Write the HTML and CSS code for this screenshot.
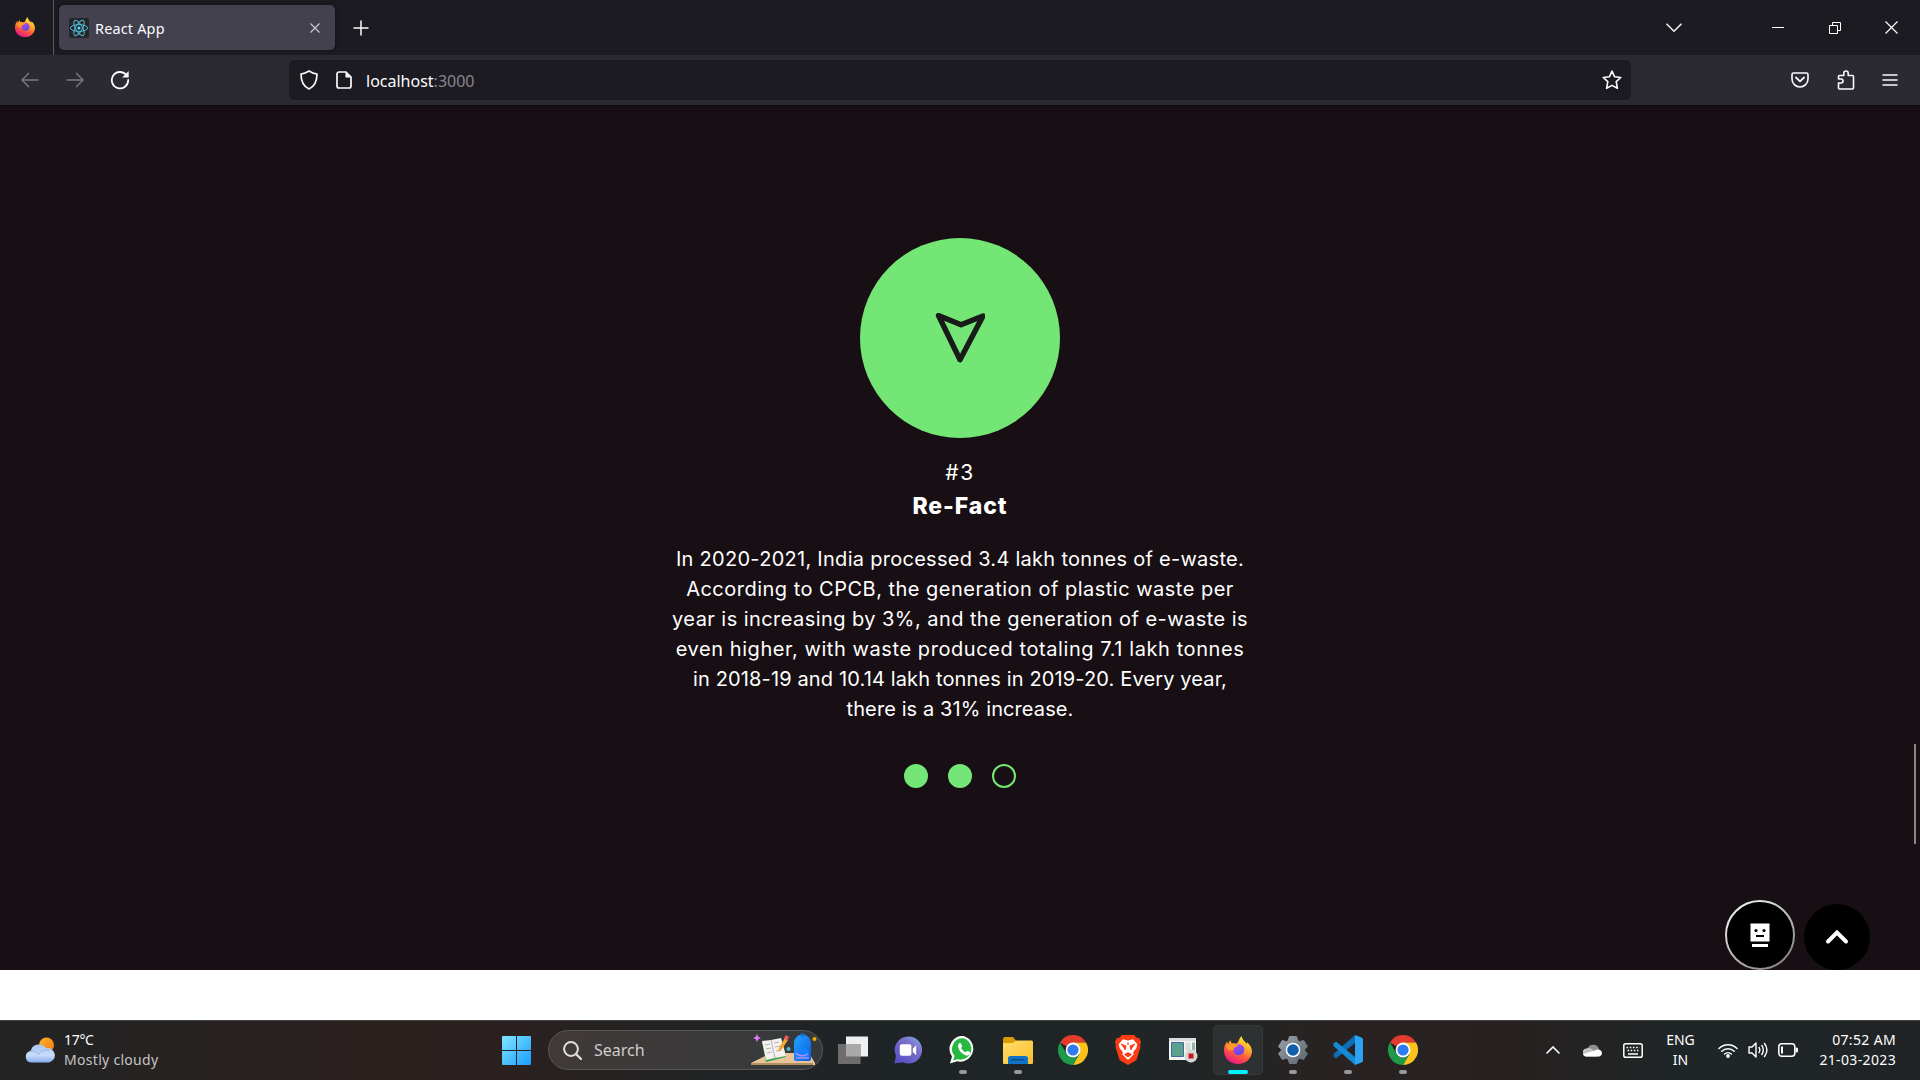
FILE: index.html
```html
<!DOCTYPE html>
<html lang="en">
<head>
<meta charset="utf-8">
<title>React App</title>
<link rel="stylesheet" href="styles.css">
</head>
<body>
<svg class="defs" width="0" height="0" aria-hidden="true">
  <defs>
    <linearGradient id="ffBody" x1="0.8" y1="0" x2="0.3" y2="1"><stop offset="0" stop-color="#fff14a"/><stop offset=".35" stop-color="#ffb02a"/><stop offset=".65" stop-color="#ff5a3c"/><stop offset="1" stop-color="#e5128c"/></linearGradient>
    <linearGradient id="ffCore" x1="0.2" y1="0" x2="0.6" y2="1"><stop offset="0" stop-color="#b44af0"/><stop offset="1" stop-color="#5a4be0"/></linearGradient>
    <linearGradient id="winTile" x1="0" y1="0" x2="1" y2="1"><stop offset="0" stop-color="#7fe7ff"/><stop offset="1" stop-color="#1a9cff"/></linearGradient>
    <linearGradient id="sun" x1="0" y1="0" x2="1" y2="1"><stop offset="0" stop-color="#fbb626"/><stop offset="1" stop-color="#f5760f"/></linearGradient>
    <linearGradient id="cloud" x1="0" y1="0" x2="0" y2="1"><stop offset="0" stop-color="#a9c6f5"/><stop offset=".6" stop-color="#c9dbf8"/><stop offset="1" stop-color="#86aef0"/></linearGradient>
    <linearGradient id="chat" x1="1" y1="0" x2="0.2" y2="1"><stop offset="0" stop-color="#7fb2ea"/><stop offset=".4" stop-color="#7c6fc8"/><stop offset="1" stop-color="#5650c4"/></linearGradient>
    <linearGradient id="folder" x1="0" y1="0" x2="1" y2="1"><stop offset="0" stop-color="#ffdc6a"/><stop offset="1" stop-color="#fbc02c"/></linearGradient>
    <linearGradient id="gear" x1="0" y1="0" x2="1" y2="1"><stop offset="0" stop-color="#98a2ab"/><stop offset="1" stop-color="#5d656d"/></linearGradient>
    <linearGradient id="ring" x1="0" y1="0" x2="0.7" y2="1"><stop offset="0" stop-color="#fff"/><stop offset="1" stop-color="#8a8588"/></linearGradient>
    <linearGradient id="bag" x1="0" y1="0" x2="1" y2="1"><stop offset="0" stop-color="#22a5ff"/><stop offset="1" stop-color="#0a5be0"/></linearGradient>
    <symbol id="firefox" viewBox="0 0 28 28">
      <path fill="url(#ffBody)" d="M14 28C6 28 0 22.400 0 14.600 0 11 1.200 7.500 3.200 5.600c.1 1.100.3 1.900.9 2.600C4.500 6.600 5.300 5.300 6.600 4.300c0 1.300.4 2.300 1.300 3 1.300-.3 3-.2 4.300.5 1-.4 1.600-1.200 2.200-2.200C15 3.600 16 1.500 17.600 0c.5 2.600 1.600 4.300 3.300 5.800.8.700 1.400 1.300 1.900 2.200.2-.7.2-1.300.1-2C26.200 8.800 28 12 28 15.600 27.600 22.800 21.700 28 14 28z"/>
      <path fill="url(#ffCore)" d="M9 13.200c.6-3.500 4-5.700 7.400-4.700 3 .9 4.500 3.700 3.600 6.800-.8 3-4 4.700-7 3.700-2.600-.9-4-3.100-4-5.800z"/>
      <path fill="#ff9a2a" d="M2 11c2.300-2.500 6.500-4 10-3l2 1.200c-1.200 1.700-2.700 2.200-4.500 2.400 0 1 .2 1.800.7 2.500-1.500-.5-3.200-.4-4.700 1C4 13.500 3 12 2 11z"/>
    </symbol>
    <symbol id="chrome" viewBox="0 0 30 30">
      <path fill="#e33b2e" d="M15 15 2 7.500A15 15 0 0 1 28 7.500H15z"/>
      <path fill="#fcc31e" d="M15 15V7.500h13A15 15 0 0 1 15 30l6.500-11.200z"/>
      <path fill="#1f9a4b" d="M2 7.500 8.500 18.800A7.500 7.500 0 0 0 21.500 18.800L15 30A15 15 0 0 1 2 7.500z"/>
      <circle cx="15" cy="15" r="7.400" fill="#fff"/><circle cx="15" cy="15" r="5.600" fill="#2f7bef"/>
    </symbol>
  </defs>
</svg>

<header class="tabs">
  <div class="pinned"><svg width="20" height="20"><use href="#firefox"/></svg></div>
  <div class="tab">
    <svg class="favicon" width="20" height="20" viewBox="0 0 20 20"><rect width="20" height="20" rx="2" fill="#22272a"/><g fill="none" stroke="#53b9d6" stroke-width="1"><ellipse cx="10" cy="10" rx="8.600" ry="3.400"/><ellipse cx="10" cy="10" rx="8.600" ry="3.400" transform="rotate(60 10 10)"/><ellipse cx="10" cy="10" rx="8.600" ry="3.400" transform="rotate(120 10 10)"/></g><circle cx="10" cy="10" r="1.600" fill="#61dafb"/></svg>
    <span class="tab-title">React App</span>
    <svg width="10" height="10" viewBox="0 0 10 10"><path d="M.5.5l9 9M9.500.5l-9 9" stroke="#c9c8ce" stroke-width="1.200"/></svg>
  </div>
  <svg class="new-tab" width="16" height="16" viewBox="0 0 16 16"><path d="M8 .5v15M.5 8h15" stroke="#fbfbfe" stroke-width="1.500"/></svg>
  <div class="window-controls">
    <svg width="16" height="10" viewBox="0 0 16 10"><path d="M1 1.200l7 7 7-7" fill="none" stroke="#f0f0f4" stroke-width="1.600" stroke-linecap="round"/></svg>
    <svg class="minimize" width="12" height="12" viewBox="0 0 12 12"><path d="M0 5.500h12" stroke="#fff"/></svg>
    <svg class="restore" width="12" height="12" viewBox="0 0 12 12"><path d="M.5 3.500h8v8h-8zM3.500 3.500v-3h8v8h-3" fill="none" stroke="#fff"/></svg>
    <svg class="close" width="13" height="13" viewBox="0 0 13 13"><path d="M.5.5l12 12M12.500.5l-12 12" stroke="#fff" stroke-width="1.200"/></svg>
  </div>
</header>

<nav class="toolbar">
  <svg class="nav-icon" width="18" height="16" viewBox="0 0 18 16"><path d="M17.500 8H1M8 1L1 8l7 7" fill="none" stroke="#7b7a81" stroke-width="1.400"/></svg>
  <svg class="nav-icon" width="18" height="16" viewBox="0 0 18 16"><path d="M.5 8H17M10 1l7 7-7 7" fill="none" stroke="#7b7a81" stroke-width="1.400"/></svg>
  <svg class="nav-icon reload" width="20" height="20" viewBox="0 0 20 20"><path d="M16.500 5.200A8.200 8.200 0 1 0 18.200 10" fill="none" stroke="#fbfbfe" stroke-width="1.800" stroke-linecap="round"/><path d="M18.700 1v6.600h-6.600z" fill="#fbfbfe"/></svg>
  <div class="urlbar">
    <svg width="18" height="20" viewBox="0 0 18 20"><path d="M9 1c2.500 1.600 5 2.600 8 3 0 6.500-1.500 12-8 15-6.500-3-8-8.500-8-15 3-.4 5.500-1.400 8-3z" fill="none" stroke="#fbfbfe" stroke-width="1.700" stroke-linejoin="round"/></svg>
    <svg class="page-icon" width="16" height="18" viewBox="0 0 16 18"><path d="M3 1h7l5 5v9a2 2 0 0 1-2 2H3a2 2 0 0 1-2-2V3a2 2 0 0 1 2-2z" fill="none" stroke="#fbfbfe" stroke-width="1.700"/><path d="M9.500 1v5.500H15z" fill="#fbfbfe"/></svg>
    <span class="url">localhost<span class="port">:3000</span></span>
    <svg width="20" height="20" viewBox="0 0 20 20"><path d="M10 1.200l2.500 5.500 6.300.8-4.600 4.200 1.200 6.600L10 15.400l-5.400 2.900 1.200-6.600L1.200 7.500l6.300-.8z" fill="none" stroke="#fbfbfe" stroke-width="1.600" stroke-linejoin="round"/></svg>
  </div>
  <div class="actions">
    <svg width="18" height="16" viewBox="0 0 18 16"><path d="M2.500 1h13A1.500 1.500 0 0 1 17 2.500V7a8 8 0 0 1-16 0V2.500A1.500 1.500 0 0 1 2.500 1z" fill="none" stroke="#fbfbfe" stroke-width="1.600"/><path d="M5 5.500l4 3.800 4-3.800" fill="none" stroke="#fbfbfe" stroke-width="1.800" stroke-linecap="round"/></svg>
    <svg width="18" height="20" viewBox="0 0 18 20"><path d="M1.500 13V18a1 1 0 0 0 1 1H15.500a1 1 0 0 0 1-1V6.500a1 1 0 0 0-1-1H11.200V3.200a2.200 2.200 0 0 0-4.400 0V5.500H2.500a1 1 0 0 0-1 1V9H4a2 2 0 0 1 0 4z" fill="none" stroke="#fbfbfe" stroke-width="1.600" stroke-linejoin="round"/></svg>
    <svg width="16" height="14" viewBox="0 0 16 14"><path d="M.5 2h15M.5 7h15M.5 12h15" stroke="#fbfbfe" stroke-width="1.400"/></svg>
  </div>
</nav>

<main class="page">
  <section class="fact">
    <div class="badge"><svg width="50" height="50" viewBox="0 0 50 50"><path d="M3.500 2.500L26 11.700 48 3 25 46.700z" fill="none" stroke="#181b18" stroke-width="5.400" stroke-linejoin="round"/></svg></div>
    <p class="number">#3</p>
    <h2 class="title">Re-Fact</h2>
    <p class="copy">
      <span class="l1">In 2020-2021, India processed 3.4 lakh tonnes of e-waste.</span><br>
      <span class="l2">According to CPCB, the generation of plastic waste per</span><br>
      <span class="l3">year is increasing by 3%, and the generation of e-waste is</span><br>
      <span class="l4">even higher, with waste produced totaling 7.1 lakh tonnes</span><br>
      <span class="l5">in 2018-19 and 10.14 lakh tonnes in 2019-20. Every year,</span><br>
      <span class="l6">there is a 31% increase.</span>
    </p>
    <div class="dots"><i class="dot"></i><i class="dot"></i><i class="dot open"></i></div>
  </section>
  <div class="floating">
    <svg width="70" height="70" viewBox="0 0 70 70"><circle cx="35" cy="35" r="34" fill="#000" stroke="url(#ring)" stroke-width="2"/><path fill="#fff" d="M25.500 23.500h19v18h-19zM27 44h16v3H27z"/><g fill="#000"><circle cx="31" cy="30.500" r="1.600"/><circle cx="39" cy="30.500" r="1.600"/><path d="M31 35h8v2h-8z"/></g></svg>
    <svg width="66" height="66" viewBox="0 0 66 66"><circle cx="33" cy="33" r="33" fill="#000"/><path d="M24 37.500l9-9 9 9" fill="none" stroke="#fff" stroke-width="4" stroke-linecap="round"/></svg>
  </div>
  <div class="scroll-thumb"></div>
</main>
<div class="below"></div>

<footer class="taskbar">
  <div class="weather">
    <svg width="30" height="26" viewBox="0 0 30 26"><circle cx="21.500" cy="8" r="7.500" fill="url(#sun)"/><path d="M6 25.500a5.800 5.800 0 0 1-.3-11.500A8.500 8.500 0 0 1 21 11.200 7.300 7.300 0 0 1 24 25.500z" fill="url(#cloud)"/><path d="M4 14.500c4-1.500 8 0 9.500 3 2-4 7-6 11-4" fill="none" stroke="#8fb1ec" stroke-width="1"/></svg>
    <div class="weather-text"><span class="temp">17°C</span><span class="sky">Mostly cloudy</span></div>
  </div>
  <svg class="start" width="29" height="29" viewBox="0 0 29 29"><path fill="url(#winTile)" d="M0 1a1 1 0 0 1 1-1h13v14H0zM15 0h13a1 1 0 0 1 1 1v13H15zM0 15h14v14H1a1 1 0 0 1-1-1zM15 15h14v13a1 1 0 0 1-1 1H15z"/></svg>
  <div class="search">
    <svg width="19" height="19" viewBox="0 0 19 19"><circle cx="8" cy="8" r="6.900" fill="none" stroke="#e0e0e0" stroke-width="2"/><path d="M13 13l5 5" stroke="#e0e0e0" stroke-width="2.400" stroke-linecap="round"/></svg>
    <span class="search-label">Search</span>
    <svg class="search-art" width="70" height="34" viewBox="0 0 70 34">
      <path d="M0 30L20 20h38l6 10v2H0z" fill="#e8c49b"/><path d="M0 30h62v2H0z" fill="#b98e62"/>
      <path d="M11 9l20-3 4 18-20 5z" fill="#3aa24c"/><path d="M11 8l9-1 4 18-9 2zM20 7l10-2 5 18-11 2z" fill="#f4f1ee"/><path d="M20 7l4 18M14 12l5-1M15 16l5-1M16 20l5-1M23 10l5-1M24 14l6-1M25 18l6-1" stroke="#a8a3a6" stroke-width=".8"/>
      <path d="M27 19l1-4 6-10 3 2-6 9z" fill="#f7a52c"/><path d="M33 5l2-3 3 2-2 4z" fill="#ee5b5b"/>
      <path d="M6 1l1.300 2.700L10 5 7.300 6.300 6 9 4.700 6.300 2 5l2.700-1.300z" fill="#dc7cf2"/>
      <circle cx="37.500" cy="16" r="2" fill="#45bdd8"/><circle cx="63.500" cy="6" r="2" fill="#f2a900"/>
      <path d="M43 26V10a8.500 8.500 0 0 1 17 0v16a2 2 0 0 1-2 2H45a2 2 0 0 1-2-2z" fill="url(#bag)"/><circle cx="51.500" cy="1.800" r="1.800" fill="none" stroke="#1569d8"/><path d="M45 25v-4a6.500 6 0 0 1 13 0v4z" fill="#1482ff"/><path d="M45 20c3 4 9 3 12 1M45 25h13" stroke="#b48cff" stroke-width="1.300" fill="none"/>
    </svg>
  </div>
  <div class="apps">
    <div class="app"><svg width="30" height="28" viewBox="0 0 30 28"><path d="M8 .5h22v20H8z" fill="#eeefef"/><path d="M0 8h22.500v20H0z" fill="#6d6d6d"/><path d="M8 8h14.500v12.500H8z" fill="#a9a9a9"/></svg></div>
    <div class="app"><svg width="28" height="28" viewBox="0 0 29 28"><path d="M15 0a14 14 0 1 1-6 26.600L.5 28l1.500-8A14 14 0 0 1 15 0z" fill="url(#chat)"/><rect x="6" y="8" width="12" height="12" rx="2" fill="#fff"/><path d="M19.500 12.500l3.500-3.500v10.500l-3.500-3.500z" fill="#fff"/></svg></div>
    <div class="app running"><svg width="28" height="28" viewBox="0 0 28 28"><path d="M14.500 0A13 13 0 1 1 8 25.200L1 27.500l2-7A13 13 0 0 1 14.500 0z" fill="#fff"/><path d="M14.500 2.300A10.800 10.800 0 1 1 8.500 23.200l-4.300 1.200L5.500 20A10.800 10.800 0 0 1 14.500 2.300z" fill="#29b842"/><path d="M10 7.300c.7-.6 1.700-.5 2 .2l1.100 2.400c.2.800-1.200 1.500-1 2.100.9 1.900 2.400 3.400 4.400 4.100.8.200 1.300-1.400 2.100-1.200l2.300 1.200c.9.500-.1 3-1.700 3.400C15 20.500 6.500 13 10 7.300z" fill="#fff"/></svg></div>
    <div class="app running"><svg width="30" height="27" viewBox="0 0 30 27"><path d="M0 2a2 2 0 0 1 2-2h8l3 3.500V9H0z" fill="#dc9a07"/><path d="M0 6h10l3-2.500h15.500A1.500 1.500 0 0 1 30 5v21a1 1 0 0 1-1 1H1a1 1 0 0 1-1-1z" fill="url(#folder)"/><path d="M5 27v-5.500A2.500 2.500 0 0 1 7.500 19h15a2.500 2.500 0 0 1 2.500 2.500V27z" fill="#0f74c7"/><path d="M8.500 22.700h13" stroke="#09457e" stroke-width="1.300"/></svg></div>
    <div class="app"><svg width="30" height="30"><use href="#chrome"/></svg></div>
    <div class="app"><svg width="26" height="30" viewBox="0 0 26 30"><path d="M7 0h12l3 3 2-.3L26 7l-1 3 .5 2-4 13L13 30l-8.500-5-4-13L1 10 0 7l2-4.300L4 3z" fill="#fa3c14"/><path d="M13 5.500l5-1.200 4.300 5-1 4-3.300 4 .8 2L13 25l-5.800-5.700.8-2-3.300-4-1-4 4.300-5z" fill="#fff"/><path d="M6 9l5 2-1 4M20 9l-5 2 1 4M13 7v3M9.500 19.500l3.500-1.800 3.500 1.800-3.500 2.300z" fill="#fa3c14" stroke="#fa3c14" stroke-width="1"/></svg></div>
    <div class="app"><svg width="30" height="26" viewBox="0 0 30 26"><path d="M1 1h27v22H1z" fill="#f4f4f4"/><path d="M1 1h27v3H1z" fill="#d9dde2"/><path d="M3.500 5.500h12v14h-12z" fill="#5aa08c" stroke="#3f6c9b"/><path d="M17.500 5.500h5v8h-5z" fill="#dcdcdc"/><path d="M24 5.500h3v8h-3z" fill="#8fb9a6"/><circle cx="23" cy="19" r="6.500" fill="#d6d6d6"/><rect x="20.500" y="16.500" width="5" height="5" fill="#cc1414"/></svg></div>
    <div class="app running active"><svg width="28" height="28"><use href="#firefox"/></svg></div>
    <div class="app running"><svg width="30" height="30" viewBox="0 0 30 30"><path d="M11.500 1.500h7l1.200 4 2 1.200 4-1.200 3.800 6-2.800 2.700v1.600l2.800 2.700-3.800 6-4-1.200-2 1.200-1.200 4h-7l-1.200-4-2-1.200-4 1.200-3.800-6 2.800-2.700v-1.600L.5 11.500l3.800-6 4 1.200 2-1.200z" fill="url(#gear)" stroke="url(#gear)" stroke-linejoin="round"/><circle cx="15" cy="15" r="7.300" fill="#fff"/><circle cx="15" cy="15" r="5.800" fill="#1160ad"/></svg></div>
    <div class="app running"><svg width="30" height="30" viewBox="0 0 30 30"><path d="M22 8L3 23.500.5 21.500V19L22 0z" fill="#0d6db5"/><path d="M22 22L3 6.500.5 8.500V11L22 30z" fill="#1489d4"/><path d="M22 0l6.500 2.500A2.500 2.500 0 0 1 30 4.800v20.400a2.500 2.500 0 0 1-1.500 2.300L22 30z" fill="#2ba3f2"/></svg></div>
    <div class="app running"><svg width="30" height="30"><use href="#chrome"/></svg></div>
  </div>
  <div class="tray">
    <svg class="up" width="14" height="8" viewBox="0 0 14 8"><path d="M1 7l6-6 6 6" fill="none" stroke="#fff" stroke-width="1.600" stroke-linecap="round"/></svg>
    <svg class="drive" width="20" height="13" viewBox="0 0 20 13"><path d="M4.500 5a6 6 0 0 1 11.500 0v4H4z" fill="#8f8f8f"/><path d="M4 12.500a4 4 0 0 1-.5-8c3-1 5 0 7 2l4 6z" fill="#c4c4c4"/><path d="M3 12.500c-1.500 0-2.500-1-3-2.500L12 6.500a5 5 0 0 1 4.500-.7A3.500 3.500 0 0 1 16.500 12.500z" fill="#fff"/></svg>
    <svg class="kbd" width="20" height="15" viewBox="0 0 20 15"><rect x=".8" y=".8" width="18.400" height="13.400" rx="1.800" fill="none" stroke="#fff" stroke-width="1.500"/><path d="M3.500 4.500h13M4.500 7.500h11" stroke="#fff" stroke-width="1.600" stroke-dasharray="1.600 1.600"/><path d="M5 11h10" stroke="#fff" stroke-width="1.500"/></svg>
    <div class="lang"><span>ENG</span><span>IN</span></div>
    <svg class="wifi" width="20" height="15" viewBox="0 0 20 15"><g fill="none" stroke="#fff" stroke-width="1.500" stroke-linecap="round"><path d="M1 5.500a12.500 12.500 0 0 1 18 0M3.800 8.300a8.600 8.600 0 0 1 12.400 0M6.600 11a4.900 4.900 0 0 1 6.800 0"/></g><circle cx="10" cy="13" r="1.900" fill="#fff"/></svg>
    <svg class="volume" width="20" height="18" viewBox="0 0 20 18"><g fill="none" stroke="#fff" stroke-width="1.400" stroke-linecap="round" stroke-linejoin="round"><path d="M1 6h3l4-4v14l-4-4H1zM11 6.500c1 1.500 1 3.500 0 5M13.800 4.500c2 2.500 2 6.500 0 9M16.500 2.500c3 4 3 9 0 13"/></g></svg>
    <svg class="battery" width="20" height="14" viewBox="0 0 20 14"><rect x=".8" y=".8" width="16" height="12.400" rx="3" fill="none" stroke="#fff" stroke-width="1.500"/><path d="M3 3.500h2v7H3zM17.500 4.500h1a1.500 1.500 0 0 1 1.500 1.500v2a1.500 1.500 0 0 1-1.500 1.500h-1z" fill="#fff"/></svg>
    <div class="clock"><span>07:52 AM</span><span>21-03-2023</span></div>
  </div>
</footer>
</body>
</html>
```
FILE: styles.css
```css
* { box-sizing: border-box; }
body {
  margin: 0;
  width: 1920px;
  height: 1080px;
  overflow: hidden;
  display: flex;
  flex-direction: column;
  background: #fff;
  color: #fff;
  font-family: "Noto Sans", "Open Sans", sans-serif;
}
svg { display: block; flex: none; }
p, h2 { margin: 0; }
.defs { position: absolute; }

/* Tab strip */
.tabs { height: 55px; background: #1c1b22; display: flex; align-items: center; }
.pinned { width: 54px; height: 55px; padding: 17px 0 0 15px; border-right: 1px solid #5b5a62; }
.tab { width: 276px; height: 45px; margin-left: 5px; padding: 0 15px 0 10px; display: flex; align-items: center; background: #42414d; border-radius: 5px; box-shadow: 0 0 4px rgba(0, 0, 0, .4); }
.tab-title { flex: 1; margin-left: 6px; padding-top: 2px; font-size: 14.4px; letter-spacing: .2px; color: #fbfbfe; }
.new-tab { margin-left: 18px; }
.window-controls { flex: 1; display: flex; align-items: center; justify-content: flex-end; padding-right: 22px; }
.minimize { margin-left: 90px; }
.restore { margin-left: 45px; }
.close { margin-left: 44px; }

/* Navigation bar */
.toolbar { height: 51px; padding: 0 22px 1px 21px; background: #2b2a33; border-bottom: 1px solid #0c0c0d; display: flex; align-items: center; }
.nav-icon { margin-right: 27px; }
.reload { margin-left: -1px; }
.urlbar { width: 1342px; height: 40px; margin-left: 132px; padding: 0 9px 0 11px; display: flex; align-items: center; background: #1c1b22; border-radius: 5px; }
.page-icon { margin-left: 18px; }
.url { flex: 1; margin-left: 14px; padding-top: 3px; font-size: 16px; color: #fbfbfe; }
.port { color: #87868c; }
.actions { flex: 1; display: flex; align-items: center; justify-content: flex-end; gap: 27.500px; }

/* Page content */
.page { position: relative; height: 864px; background: #180f14; font-family: Inter, "Open Sans", sans-serif; }
.fact { padding-top: 132px; display: flex; flex-direction: column; align-items: center; text-align: center; }
.badge { width: 200px; height: 200px; border-radius: 50%; background: #73e676; padding: 75px; }
.number { margin-top: 20px; font-size: 21px; line-height: 30px; letter-spacing: 1.500px; }
.title { font-size: 23px; line-height: 36px; font-weight: 800; letter-spacing: .9px; }
.copy { margin-top: 20px; font-size: 20px; line-height: 30px; white-space: nowrap; }
.l1 { letter-spacing: .28px; }
.l2 { letter-spacing: .49px; }
.l3 { letter-spacing: .44px; }
.l4 { letter-spacing: .58px; }
.l5 { letter-spacing: .14px; }
.l6 { letter-spacing: .1px; }
.dots { margin-top: 40px; display: flex; gap: 20px; }
.dot { width: 24px; height: 24px; border-radius: 50%; background: #73e676; border: 2px solid #73e676; }
.dot.open { background: none; }
.floating { position: absolute; right: 50px; bottom: 0; display: flex; align-items: flex-end; gap: 9px; }
.scroll-thumb { position: absolute; right: 4px; top: 638px; width: 2px; height: 100px; background: #8c888a; }
.below { height: 50px; background: #fff; }

/* Taskbar */
.taskbar { height: 60px; padding-bottom: 1px; border-top: 1px solid #414242; display: flex; align-items: center; font-size: 14px;
  background: linear-gradient(90deg, #232425 0, #262221 180px, #2b201e 400px, #2a2120 520px, #212425 720px, #1e2325 900px, #202526 1150px, #282322 1330px, #262120 1520px, #1f2628 1700px, #202325 1920px); }
.weather { width: 502px; padding-left: 25px; display: flex; align-items: center; gap: 9px; }
.weather-text, .lang, .clock { display: flex; flex-direction: column; line-height: 20px; }
.weather-text, .lang, .clock { padding-bottom: 1px; }
.temp { letter-spacing: -.3px; }
.sky { color: #c5c3c2; letter-spacing: .3px; }
.search { width: 275px; height: 40px; margin-left: 17px; padding: 0 1px 0 14px; display: flex; align-items: center; border: 1px solid #595656; border-radius: 20px; background: linear-gradient(90deg, #403938, #3b3a3b 60%, #35393b); }
.search-label { flex: 1; margin-left: 12px; font-size: 16px; color: #cfcccb; }
.apps { margin-left: 5px; display: flex; gap: 5px; }
.app { position: relative; width: 50px; height: 50px; display: flex; align-items: center; justify-content: center; }
.running::after { content: ""; position: absolute; left: 21px; bottom: 1px; width: 8px; height: 4px; border-radius: 2px; background: #989898; }
.active { background: #2d3132; border-radius: 5px; box-shadow: inset 0 0 0 1px #363a3b; }
.active::after { left: 15px; width: 20px; background: #00f0ff; }
.tray { flex: 1; display: flex; align-items: center; }
.up { margin-left: 118px; }
.drive { margin-left: 23px; }
.kbd { margin-left: 20px; }
.lang { width: 75px; align-items: center; }
.volume, .battery { margin-left: 10px; }
.clock { flex: 1; padding-right: 24px; align-items: flex-end; letter-spacing: .35px; }
```
